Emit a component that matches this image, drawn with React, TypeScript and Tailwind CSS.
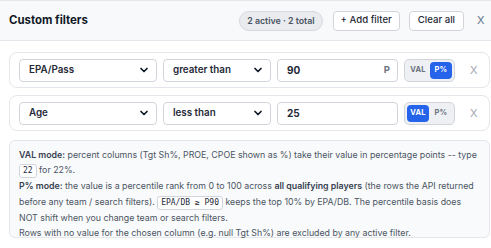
import { ChevronDown } from 'lucide-react';

type Mode = 'VAL' | 'P%';

interface FilterRowProps {
  column: string;
  op: string;
  value: string;
  mode: Mode;
}

const SelectBox = ({ label, width }: { label: string; width: string }) => (
  <div
    className={`${width} h-[23px] flex items-center justify-between pl-[9px] pr-[6px] bg-white border border-[#d1d5db] rounded-[4px] text-[9.8px] font-semibold text-[#1f2937]`}
  >
    <span>{label}</span>
    <ChevronDown size={12} strokeWidth={3.4} className="text-[#111827]" />
  </div>
);

const ModeToggle = ({ mode }: { mode: Mode }) => (
  <div className="w-[51px] h-[23px] flex items-center p-[2px] gap-[1px] bg-[#eef0f3] border border-[#d1d5db] rounded-[5px]">
    {(['VAL', 'P%'] as Mode[]).map((m) => (
      <span
        key={m}
        className={`flex-1 h-full flex items-center justify-center rounded-[4px] text-[7.5px] font-bold tracking-[0.3px] ${
          mode === m ? 'bg-[#2563eb] text-white' : 'text-[#6b7280]'
        }`}
      >
        {m}
      </span>
    ))}
  </div>
);

const FilterRow = ({ column, op, value, mode }: FilterRowProps) => (
  <div className="h-[36px] flex items-center pl-[9px] gap-[6px] bg-white border border-[#e3e6ea] rounded-[8px]">
    <SelectBox label={column} width="w-[138px]" />
    <SelectBox label={op} width="w-[108px]" />
    <div className="w-[121px] h-[23px] flex items-center justify-between pl-[9px] pr-[7px] bg-white border border-[#d1d5db] rounded-[4px] text-[10px] font-bold text-[#1f2937]">
      <span>{value}</span>
      {mode === 'P%' && <span className="text-[9.5px] font-bold text-[#6b7280]">P</span>}
    </div>
    <ModeToggle mode={mode} />
    <span className="ml-[9px] text-[11px] text-[#a3a8b1]">X</span>
  </div>
);

const Code = ({ children }: { children: string }) => (
  <code className="inline-block px-[3px] leading-[12px] bg-white border border-[#d1d5db] rounded-[3px] text-[8px] text-[#1f2937] font-['DejaVu_Sans_Mono',monospace]">
    {children}
  </code>
);

export default function App() {
  return (
    <div className="w-[491px] h-[248px] bg-white font-['Inter',sans-serif] overflow-hidden">
      <div className="h-[41px] flex items-center justify-between pl-[9px] pr-[4px] bg-[#f8f9fb] border-t border-b border-[#e3e6ea]">
        <h2 className="text-[11.4px] font-bold text-[#111827]">Custom filters</h2>
        <div className="flex items-center">
          <span className="h-[20px] px-[7px] flex items-center rounded-full bg-[#e9ebef] border border-[#d5d9df] text-[8.8px] font-semibold text-[#4b5563]">
            2 active · 2 total
          </span>
          <button className="ml-[10px] h-[20px] px-[7px] flex items-center bg-white border border-[#d1d5db] rounded-[4px] text-[9.6px] font-medium text-[#1f2937]">
            + Add filter
          </button>
          <button className="ml-[9px] h-[20px] px-[8px] flex items-center bg-white border border-[#d1d5db] rounded-[4px] text-[9.6px] font-medium text-[#1f2937]">
            Clear all
          </button>
          <span className="ml-[13px] w-[10px] text-[11px] text-[#64748b]">X</span>
        </div>
      </div>
      <div className="pl-[9px] pr-[1px] pt-[11px] flex flex-col gap-[7px]">
        <FilterRow column="EPA/Pass" op="greater than" value="90" mode="P%" />
        <FilterRow column="Age" op="less than" value="25" mode="VAL" />
        <div className="mt-[2px] h-[98px] pl-[9px] pr-[4px] pt-[6px] bg-[#f9fafb] border border-[#e3e6ea] rounded-[6px] text-[8.8px] leading-[15.3px] text-[#4b5563]">
          <div>
            <b className="font-semibold text-[#374151]">VAL mode:</b> percent columns (Tgt Sh%, PROE, CPOE shown as %) take their value in percentage points -- type{' '}
            <Code>22</Code> for 22%.
          </div>
          <div>
            <b className="font-semibold text-[#374151]">P% mode:</b> the value is a percentile rank from 0 to 100 across{' '}
            <b className="font-semibold text-[#374151]">all qualifying players</b> (the rows the API returned before any team / search filters).{' '}
            <Code>EPA/DB ≥ P90</Code> keeps the top 10% by EPA/DB. The percentile basis does
            <br />
            NOT shift when you change team or search filters.
          </div>
          <div>Rows with no value for the chosen column (e.g. null Tgt Sh%) are excluded by any active filter.</div>
        </div>
      </div>
    </div>
  );
}
